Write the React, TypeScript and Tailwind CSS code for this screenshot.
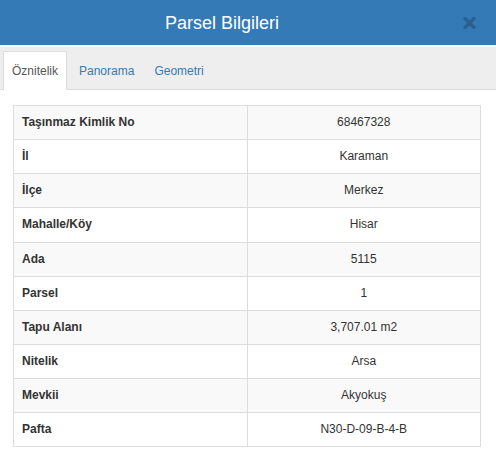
import React from 'react';

const rows = [
  { label: 'Taşınmaz Kimlik No', value: '68467328' },
  { label: 'İl', value: 'Karaman' },
  { label: 'İlçe', value: 'Merkez' },
  { label: 'Mahalle/Köy', value: 'Hisar' },
  { label: 'Ada', value: '5115' },
  { label: 'Parsel', value: '1' },
  { label: 'Tapu Alanı', value: '3,707.01 m2' },
  { label: 'Nitelik', value: 'Arsa' },
  { label: 'Mevkii', value: 'Akyokuş' },
  { label: 'Pafta', value: 'N30-D-09-B-4-B' },
];

const tabs = [
  { label: 'Öznitelik', active: true },
  { label: 'Panorama', active: false },
  { label: 'Geometri', active: false },
];

const App: React.FC = () => {
  return (
    <div className="w-[496px] h-[453px] bg-white overflow-hidden font-['Liberation_Sans',Arial,sans-serif] text-[#333]">
      {/* Header */}
      <div className="h-[45px] bg-[#337ab7] flex items-center">
        <h4 className="flex-1 text-center text-white text-[18px] leading-[20px]">Parsel Bilgileri</h4>
        <button className="w-[52px] h-[45px] flex items-center justify-center pr-[2px]" aria-label="close">
          <svg width="13" height="12" viewBox="0 0 13 12">
            <path d="M2 1.5 L11 10.5 M11 1.5 L2 10.5" stroke="#2a5f8f" strokeWidth="3.2" strokeLinecap="round" />
          </svg>
        </button>
      </div>
      <div className="h-[2px] bg-white" />

      {/* Tabs */}
      <div className="h-[43px] bg-[#eeeeee] border-b border-[#dddddd] flex items-end pl-[3px] gap-[4px]">
        {tabs.map(tab => (
          <a
            key={tab.label}
            href="#"
            className={
              tab.active
                ? 'h-[39px] -mb-px px-[8px] flex items-center text-[12px] text-[#555] bg-white border border-b-0 border-[#dddddd]'
                : 'h-[39px] -mb-px px-[8px] flex items-center text-[12px] text-[#337ab7]'
            }
          >
            {tab.label}
          </a>
        ))}
      </div>

      {/* Content */}
      <div className="px-[13px] pt-[15px]">
        <table className="w-[468px] border-collapse table-fixed text-[12px] leading-[1.42857]">
          <tbody>
            {rows.map((row, i) => (
              <tr key={row.label} className={i % 2 === 0 ? 'bg-[#f9f9f9]' : 'bg-white'}>
                <td className="border border-[#dddddd] p-[8px] font-bold">{row.label}</td>
                <td className="border border-[#dddddd] p-[8px] text-center">{row.value}</td>
              </tr>
            ))}
          </tbody>
        </table>
      </div>
    </div>
  );
};

export default App;
